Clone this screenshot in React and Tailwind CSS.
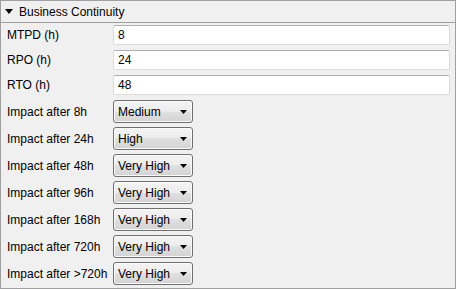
import React from "react";

const fields = [
  { label: "MTPD (h)", value: "8" },
  { label: "RPO (h)", value: "24" },
  { label: "RTO (h)", value: "48" },
];

const impacts = [
  { label: "Impact after 8h", value: "Medium" },
  { label: "Impact after 24h", value: "High" },
  { label: "Impact after 48h", value: "Very High" },
  { label: "Impact after 96h", value: "Very High" },
  { label: "Impact after 168h", value: "Very High" },
  { label: "Impact after 720h", value: "Very High" },
  { label: "Impact after >720h", value: "Very High" },
];

function Caret({ w = 7, h = 4 }) {
  return (
    <svg width={w} height={h} viewBox={`0 0 ${w} ${h}`}>
      <path d={`M0 0H${w}L${w / 2} ${h}Z`} fill="#000" />
    </svg>
  );
}

function Select({ value }) {
  return (
    <div className="flex h-[23px] w-[80px] items-center justify-between rounded-[3px] border border-[#707070] bg-[linear-gradient(#f4f4f4_0%,#ececec_50%,#e0e0e0_50%,#d3d3d3_100%)] pl-[4px] pr-[5px] shadow-[inset_0_0_0_1px_#fbfbfb]">
      <span>{value}</span>
      <Caret />
    </div>
  );
}

export default function App() {
  return (
    <div
      className="h-[289px] w-[456px] border border-[#a0a0a0] bg-[#f0f0f0] text-[12px] leading-none text-black"
      style={{ fontFamily: '"Liberation Sans", Arial, sans-serif' }}
    >
      <div className="flex h-[22px] items-center gap-[6px] border-b border-[#a0a0a0] pl-[4px]">
        <Caret w={8} h={5} />
        <span>Business Continuity</span>
      </div>

      <div className="flex flex-col gap-[5px] pl-[6px] pr-[5px] pt-[2px]">
        {fields.map((f) => (
          <div key={f.label} className="flex items-center">
            <span className="w-[106px] shrink-0">{f.label}</span>
            <div className="flex h-[20px] flex-1 items-center rounded-[2px] border border-[#dcdcdc] border-t-[#b0b0b0] bg-white pl-[4px]">
              {f.value}
            </div>
          </div>
        ))}
      </div>

      <div className="mt-[5px] flex flex-col gap-[4px] pl-[6px]">
        {impacts.map((i) => (
          <div key={i.label} className="flex items-center">
            <span className="w-[106px] shrink-0 whitespace-nowrap">{i.label}</span>
            <Select value={i.value} />
          </div>
        ))}
      </div>
    </div>
  );
}
